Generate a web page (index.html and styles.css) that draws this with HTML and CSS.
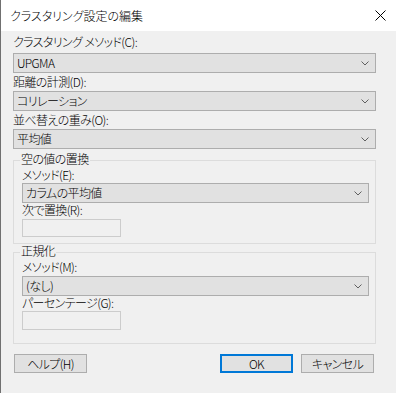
FILE: index.html
```html
<!DOCTYPE html>
<html lang="ja">
<head>
  <meta charset="UTF-8" />
  <title>クラスタリング設定の編集</title>
  <link rel="stylesheet" href="styles.css">
</head>
<body>
  <div class="window">
    <div class="titlebar">
      <span class="title">クラスタリング設定の編集</span>
      <svg class="close" width="11" height="11" viewBox="0 0 11 11">
        <path d="M0.5 0.5L10.5 10.5M10.5 0.5L0.5 10.5" stroke="#000" stroke-width="1" fill="none"/>
      </svg>
    </div>

    <div class="content">
      <div class="label label-first">クラスタリング メソッド(C):</div>
      <div class="combo combo-first">
        <span>UPGMA</span>
        <svg class="chevron" width="8" height="5" viewBox="0 0 8 5"><path d="M0.5 0.5L4 4L7.5 0.5" stroke="#606060" fill="none"/></svg>
      </div>

      <div class="label">距離の計測(D):</div>
      <div class="combo">
        <span>コリレーション</span>
        <svg class="chevron" width="8" height="5" viewBox="0 0 8 5"><path d="M0.5 0.5L4 4L7.5 0.5" stroke="#606060" fill="none"/></svg>
      </div>

      <div class="label">並べ替えの重み(O):</div>
      <div class="combo">
        <span>平均値</span>
        <svg class="chevron" width="8" height="5" viewBox="0 0 8 5"><path d="M0.5 0.5L4 4L7.5 0.5" stroke="#606060" fill="none"/></svg>
      </div>

      <fieldset class="group group-empty">
        <legend>空の値の置換</legend>
        <div class="group-label">メソッド(E):</div>
        <div class="combo combo-inner">
          <span>カラムの平均値</span>
          <svg class="chevron" width="8" height="5" viewBox="0 0 8 5"><path d="M0.5 0.5L4 4L7.5 0.5" stroke="#606060" fill="none"/></svg>
        </div>
        <div class="group-label">次で置換(R):</div>
        <div class="textbox textbox-short"></div>
      </fieldset>

      <fieldset class="group group-norm">
        <legend>正規化</legend>
        <div class="group-label">メソッド(M):</div>
        <div class="combo combo-inner combo-norm">
          <span>(なし)</span>
          <svg class="chevron" width="8" height="5" viewBox="0 0 8 5"><path d="M0.5 0.5L4 4L7.5 0.5" stroke="#606060" fill="none"/></svg>
        </div>
        <div class="group-label">パーセンテージ(G):</div>
        <div class="textbox"></div>
      </fieldset>

      <div class="buttons">
        <button class="btn">ヘルプ(H)</button>
        <span class="spacer"></span>
        <button class="btn btn-default">OK</button>
        <button class="btn">キャンセル</button>
      </div>
    </div>
  </div>
</body>
</html>
```

FILE: styles.css
```css
* {
  box-sizing: border-box;
}

body {
  margin: 0;
  background: #f0f0f0;
}

.window {
  width: 396px;
  height: 393px;
  background: #f0f0f0;
  border-left: 1px solid #707070;
  font-family: "Noto Sans CJK JP", "Noto Sans", sans-serif;
  font-size: 12px;
  font-weight: 300;
  font-feature-settings: "palt";
  color: #000;
  overflow: hidden;
}

.titlebar {
  height: 31px;
  background: #fff;
  display: flex;
  align-items: center;
  padding-left: 9px;
}

.title {
  line-height: 31px;
}

.close {
  margin-left: auto;
  margin-right: 10px;
}

.content {
  padding: 4px 20px 0 12px;
  letter-spacing: -0.6px;
}

.label {
  line-height: 14px;
  margin-top: 2px;
}

.label-first {
  margin-top: 0;
}

/* combo box (dropdown) */
.combo {
  height: 20px;
  margin-top: 2px;
  background: #e1e1e1;
  border: 1px solid #adadad;
  display: flex;
  align-items: center;
  padding: 0 6px 0 3px;
  line-height: 18px;
}

.combo-first {
  margin-top: 4px;
}

.combo .chevron {
  margin-left: auto;
}

.group {
  margin: 3px 0 0;
  padding: 0 6px 6px 8px;
  border: 1px solid #dcdcdc;
  min-width: 0;
}

.group legend {
  padding: 0 1px 2px;
  margin-left: -2px;
  line-height: 14px;
}

.group-norm {
  margin-top: 0;
  padding-bottom: 13px;
}

.group-label {
  line-height: 14px;
}

.combo-inner {
  margin-top: 1px;
}

.combo-norm {
  margin-top: 2px;
}

.textbox {
  width: 99px;
  height: 19px;
  margin-top: 1px;
  border: 1px solid #cccccc;
  background: #f0f0f0;
}

.textbox-short {
  height: 18px;
  margin-top: 2px;
}

.buttons {
  display: flex;
  margin-top: 10px;
  padding: 0 2px 0 1px;
  gap: 8px;
}

.spacer {
  flex: 1;
}

.btn {
  width: 73px;
  height: 19px;
  padding: 0;
  font: inherit;
  font-feature-settings: "palt";
  letter-spacing: inherit;
  line-height: 17px;
  color: #000;
  background: #e1e1e1;
  border: 1px solid #adadad;
}

.btn-default {
  border: 2px solid #0078d7;
  line-height: 15px;
}
```
